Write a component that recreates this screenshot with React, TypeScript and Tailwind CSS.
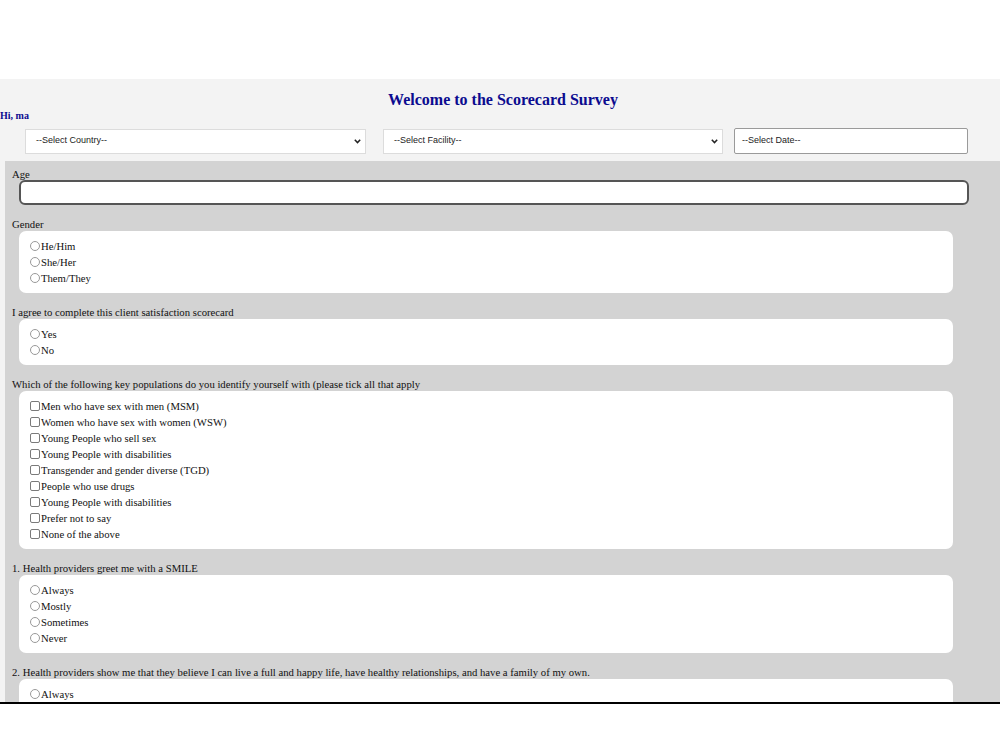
import React from "react";

const serif = { fontFamily: '"Liberation Serif", "Times New Roman", serif' };
const sans = { fontFamily: '"Liberation Sans", Arial, sans-serif' };

function Radio({ label }: { label: string }) {
  return (
    <div className="flex items-center h-[16px]">
      <span className="inline-block w-[10px] h-[10px] rounded-full border border-[#999] bg-white mr-[1px] shrink-0" />
      <span>{label}</span>
    </div>
  );
}

function Check({ label }: { label: string }) {
  return (
    <div className="flex items-center h-[16px]">
      <span className="inline-block w-[10px] h-[10px] rounded-[2px] border border-[#7a7a7a] bg-white mr-[1px] shrink-0" />
      <span>{label}</span>
    </div>
  );
}

function Question({ title, children }: { title: string; children: React.ReactNode }) {
  return (
    <div>
      <div className="pl-[7px] h-[26px] flex items-end pb-[1px] leading-[12px]">{title}</div>
      <div className="ml-[14px] w-[934px] bg-white rounded-[7px] pl-[11px] py-[7px]">{children}</div>
    </div>
  );
}

function Chevron() {
  return (
    <svg width="7" height="5" viewBox="0 0 7 5" className="shrink-0">
      <path d="M0.8 0.8 L3.5 3.6 L6.2 0.8" fill="none" stroke="#222" strokeWidth="1.5" />
    </svg>
  );
}

export default function App() {
  return (
    <div className="w-[1000px] h-[750px] bg-white overflow-hidden">
      <div className="h-[79px]" />
      <div className="h-[625px] bg-[#f3f3f3] border-b-2 border-black flex flex-col overflow-hidden">
        <div className="h-[82px] shrink-0">
          <div
            className="text-center text-[16px] font-bold text-[#0b0b8f] pt-[12px] leading-[18px] pl-[6px]"
            style={serif}
          >
            Welcome to the Scorecard Survey
          </div>
          <div className="text-[10px] font-bold text-[#0b0b8f] leading-[12px] mt-[1px]" style={serif}>
            Hi, ma
          </div>
          <div className="flex items-center mt-[6px] text-[9px] text-[#222]" style={sans}>
            <div className="ml-[25px] w-[341px] h-[25px] bg-white border border-[#dcdcdc] flex items-center justify-between pl-[10px] pr-[4px]">
              <span>--Select Country--</span>
              <Chevron />
            </div>
            <div className="ml-[17px] w-[340px] h-[25px] bg-white border border-[#dcdcdc] flex items-center justify-between pl-[10px] pr-[4px]">
              <span>--Select Facility--</span>
              <Chevron />
            </div>
            <div className="ml-[11px] w-[234px] h-[26px] bg-white border border-[#9a9a9a] rounded-[2px] flex items-center pl-[7px]">
              <span>--Select Date--</span>
            </div>
          </div>
        </div>
        <div className="flex-1 ml-[5px] bg-[#d3d3d3] text-[10.7px] text-[#111]" style={serif}>
          <div className="pl-[7px] h-[19px] flex items-end leading-[12px]">Age</div>
          <div className="ml-[14px] w-[950px] h-[25px] bg-white border-2 border-[#555] rounded-[6px]" />
          <Question title="Gender">
            <Radio label="He/Him" />
            <Radio label="She/Her" />
            <Radio label="Them/They" />
          </Question>
          <Question title="I agree to complete this client satisfaction scorecard">
            <Radio label="Yes" />
            <Radio label="No" />
          </Question>
          <Question title="Which of the following key populations do you identify yourself with (please tick all that apply">
            <Check label="Men who have sex with men (MSM)" />
            <Check label="Women who have sex with women (WSW)" />
            <Check label="Young People who sell sex" />
            <Check label="Young People with disabilities" />
            <Check label="Transgender and gender diverse (TGD)" />
            <Check label="People who use drugs" />
            <Check label="Young People with disabilities" />
            <Check label="Prefer not to say" />
            <Check label="None of the above" />
          </Question>
          <Question title="1. Health providers greet me with a SMILE">
            <Radio label="Always" />
            <Radio label="Mostly" />
            <Radio label="Sometimes" />
            <Radio label="Never" />
          </Question>
          <Question title="2. Health providers show me that they believe I can live a full and happy life, have healthy relationships, and have a family of my own.">
            <Radio label="Always" />
          </Question>
        </div>
      </div>
    </div>
  );
}
